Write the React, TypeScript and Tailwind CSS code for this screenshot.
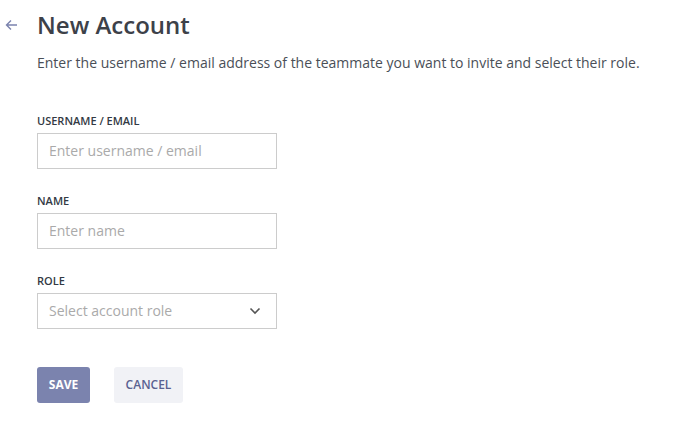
import React from "react";

const font = { fontFamily: '"Open Sans", sans-serif' };

function Label({ children }: { children: React.ReactNode }) {
  return (
    <label className="text-[11px] font-semibold uppercase text-[#333a44] leading-[16px] mb-[4px]">{children}</label>
  );
}

function Field({ label, placeholder }: { label: string; placeholder: string }) {
  return (
    <div className="flex flex-col">
      <Label>{label}</Label>
      <input
        className="w-[240px] h-[36px] border border-[#cccccc] px-[11px] pb-[1px] text-[14px] text-[#333] placeholder:text-[#aaaaaa] outline-none"
        placeholder={placeholder}
      />
    </div>
  );
}

export default function App() {
  return (
    <div className="bg-white w-[685px] h-[439px] relative" style={font}>
      <div className="flex flex-row">
        <div className="w-[37px] pt-[19px] flex justify-start pl-[5px]">
          <svg width="13" height="12" viewBox="0 0 13 12" fill="none" stroke="#7b83ae" strokeWidth="1.4">
            <path d="M12 6H1.5M6 1.5L1.5 6L6 10.5" />
          </svg>
        </div>
        <div className="flex flex-col">
          <h1 className="text-[24px] font-semibold text-[#3d4149] leading-[34px] mt-[8px]">New Account</h1>
          <p className="text-[14px] text-[#4a4f57] leading-[20px] mt-[11px]">
            Enter the username / email address of the teammate you want to invite and select their role.
          </p>
          <div className="flex flex-col gap-[24px] mt-[40px]">
            <Field label="Username / Email" placeholder="Enter username / email" />
            <Field label="Name" placeholder="Enter name" />
            <div className="flex flex-col">
              <Label>Role</Label>
              <div className="w-[240px] h-[36px] border border-[#cccccc] px-[11px] pb-[1px] flex items-center justify-between">
                <span className="text-[14px] text-[#aaaaaa]">Select account role</span>
                <svg width="12" height="8" viewBox="0 0 12 8" fill="none" stroke="#555" strokeWidth="1.6" className="mr-[4px]">
                  <path d="M1.5 1.5L6 6L10.5 1.5" />
                </svg>
              </div>
            </div>
          </div>
          <div className="flex flex-row gap-[24px] mt-[38px]">
            <button className="h-[36px] w-[53px] rounded-[3px] bg-[#7b83ae] text-white text-[12px] font-bold uppercase">Save</button>
            <button className="h-[36px] w-[69px] rounded-[3px] bg-[#f1f2f6] text-[#5a6291] text-[12px] font-semibold uppercase">Cancel</button>
          </div>
        </div>
      </div>
    </div>
  );
}
